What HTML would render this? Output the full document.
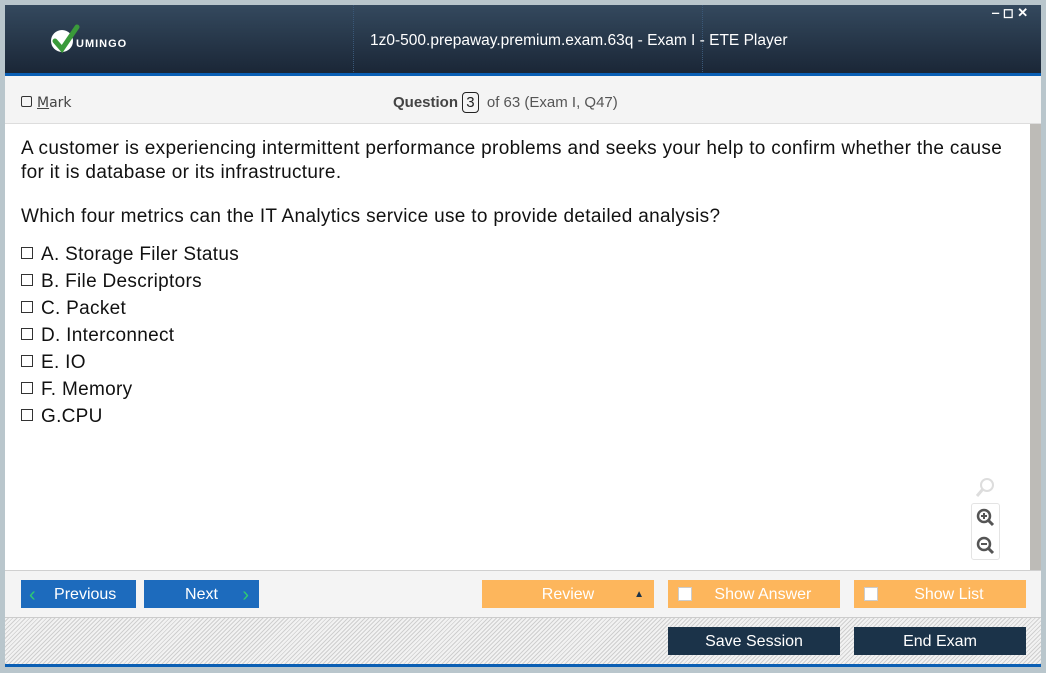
<!DOCTYPE html>
<html><head><style>
*{margin:0;padding:0;box-sizing:border-box}
body{width:1046px;height:673px;background:#b9c6cc;font-family:"Liberation Sans",sans-serif;position:relative;overflow:hidden}
.abs{position:absolute}
.hdr{left:5px;top:5px;width:1036px;height:69px;background:linear-gradient(#34495e,#1a2636)}
.title{left:370px;top:32px;color:#fff;font-size:15.5px;white-space:nowrap}
.bl{background:#0a5fb4}
.tb{left:5px;top:76px;width:1036px;height:48px;background:#f4f4f4;border-bottom:1px solid #ddd}
.ct{left:5px;top:124px;width:1025px;height:446px;background:#fff}
.sb{left:1030px;top:124px;width:11px;height:446px;background:#bdbbb7}
.q{left:21px;font-size:19px;color:#111;letter-spacing:0.32px;white-space:nowrap}
.opt{left:21px;font-size:19px;color:#111;letter-spacing:0.3px}
.cb{display:inline-block;width:12px;height:12px;border:1px solid #333;margin-right:8px;vertical-align:1px}
.nav{left:5px;top:570px;width:1036px;height:47px;background:#f4f4f4;border-top:1px solid #d0d0d0}
.hat{left:5px;top:617px;width:1036px;height:47px;background:repeating-linear-gradient(135deg,#f2f2f2 0 2px,#cfcfcf 2px 3px);border-top:1px solid #ccc}
.btn{height:28px;color:#fff;font-size:16px;text-align:center;line-height:30px}
.blue{background:#1d6bbd}
.or{background:#fdb65c}
.dk{background:#1b3349}
.wcb{position:absolute;left:10px;top:7px;width:14px;height:14px;background:#fff;border:1px solid #ccc}
</style></head><body>
<div class="abs hdr"></div>
<div class="abs" style="left:353px;top:5px;height:69px;border-left:1px dotted #3a5878"></div>
<div class="abs" style="left:702px;top:5px;height:69px;border-left:1px dotted #3a5878"></div>
<svg class="abs" style="left:50px;top:24px" width="30" height="30" viewBox="0 0 30 30"><circle cx="12" cy="17" r="11" fill="#fff"/><path d="M5 17 L12 25 L27 3" stroke="#3a9a3a" stroke-width="5" fill="none" stroke-linecap="round"/></svg>
<div class="abs" style="left:76px;top:38px;color:#fff;font-size:11px;font-weight:bold;letter-spacing:1px">UMINGO</div>
<div class="abs title">1z0-500.prepaway.premium.exam.63q - Exam I - ETE Player</div>
<div class="abs" style="left:992px;top:5px;color:#fff;font-size:13px;font-weight:bold">‒ ◻ ✕</div>
<div class="abs bl" style="left:5px;top:73px;width:1036px;height:3px"></div>
<div class="abs tb"></div>
<div class="abs" style="left:21px;top:95px;font-size:14px;color:#444;font-family:'DejaVu Sans',sans-serif"><span class="cb" style="width:11px;height:11px;border-radius:2px;margin-right:5px;vertical-align:0"></span><u>M</u>ark</div>
<div class="abs" style="left:393px;top:92px;font-size:15px;color:#555"><b style="color:#444">Question</b> <span style="display:inline-block;border:1px solid #222;border-radius:4px;padding:1px 3px;color:#222">3</span> &nbsp;of 63 (Exam I, Q47)</div>
<div class="abs ct"></div>
<div class="abs sb"></div>
<div class="abs q" style="top:137px;line-height:24px">A customer is experiencing intermittent performance problems and seeks your help to confirm whether the cause<br>for it is database or its infrastructure.</div>
<div class="abs q" style="top:206px">Which four metrics can the IT Analytics service use to provide detailed analysis?</div>
<div class="abs opt" style="top:244px"><span class="cb"></span>A. Storage Filer Status</div>
<div class="abs opt" style="top:271px"><span class="cb"></span>B. File Descriptors</div>
<div class="abs opt" style="top:298px"><span class="cb"></span>C. Packet</div>
<div class="abs opt" style="top:325px"><span class="cb"></span>D. Interconnect</div>
<div class="abs opt" style="top:352px"><span class="cb"></span>E. IO</div>
<div class="abs opt" style="top:379px"><span class="cb"></span>F. Memory</div>
<div class="abs opt" style="top:406px"><span class="cb"></span>G.CPU</div>
<svg class="abs" style="left:974px;top:476px" width="24" height="24"><circle cx="13" cy="9" r="6" stroke="#ddd" stroke-width="2" fill="none"/><path d="M9 13 L3 20" stroke="#ddd" stroke-width="3"/></svg>
<div class="abs" style="left:971px;top:503px;width:29px;height:57px;border:1px solid #e4e4e4;border-radius:3px;background:#fff"></div>
<svg class="abs" style="left:975px;top:507px" width="22" height="22"><circle cx="9" cy="9" r="6" stroke="#555" stroke-width="2.5" fill="none"/><path d="M6 9h6M9 6v6" stroke="#555" stroke-width="2"/><path d="M13 13l5 5" stroke="#555" stroke-width="3"/></svg>
<svg class="abs" style="left:975px;top:535px" width="22" height="22"><circle cx="9" cy="9" r="6" stroke="#555" stroke-width="2.5" fill="none"/><path d="M6 9h6" stroke="#555" stroke-width="2"/><path d="M13 13l5 5" stroke="#555" stroke-width="3"/></svg>
<div class="abs nav"></div>
<div class="abs btn blue" style="left:21px;top:580px;width:115px"><span style="position:absolute;left:8px;font-size:20px;color:#2ecc71">&lsaquo;</span>&nbsp;&nbsp;&nbsp;Previous</div>
<div class="abs btn blue" style="left:144px;top:580px;width:115px">Next<span style="position:absolute;right:10px;font-size:20px;color:#2ecc71">&rsaquo;</span></div>
<div class="abs btn or" style="left:482px;top:580px;width:172px">Review<span style="position:absolute;right:10px;font-size:10px;color:#1b3349">▲</span></div>
<div class="abs btn or" style="left:668px;top:580px;width:172px"><span class="wcb"></span>&nbsp;&nbsp;&nbsp;&nbsp;Show Answer</div>
<div class="abs btn or" style="left:854px;top:580px;width:172px"><span class="wcb"></span>&nbsp;&nbsp;&nbsp;&nbsp;Show List</div>
<div class="abs hat"></div>
<div class="abs btn dk" style="left:668px;top:627px;width:172px">Save Session</div>
<div class="abs btn dk" style="left:854px;top:627px;width:172px">End Exam</div>
<div class="abs bl" style="left:5px;top:664px;width:1036px;height:3px"></div>
</body></html>
